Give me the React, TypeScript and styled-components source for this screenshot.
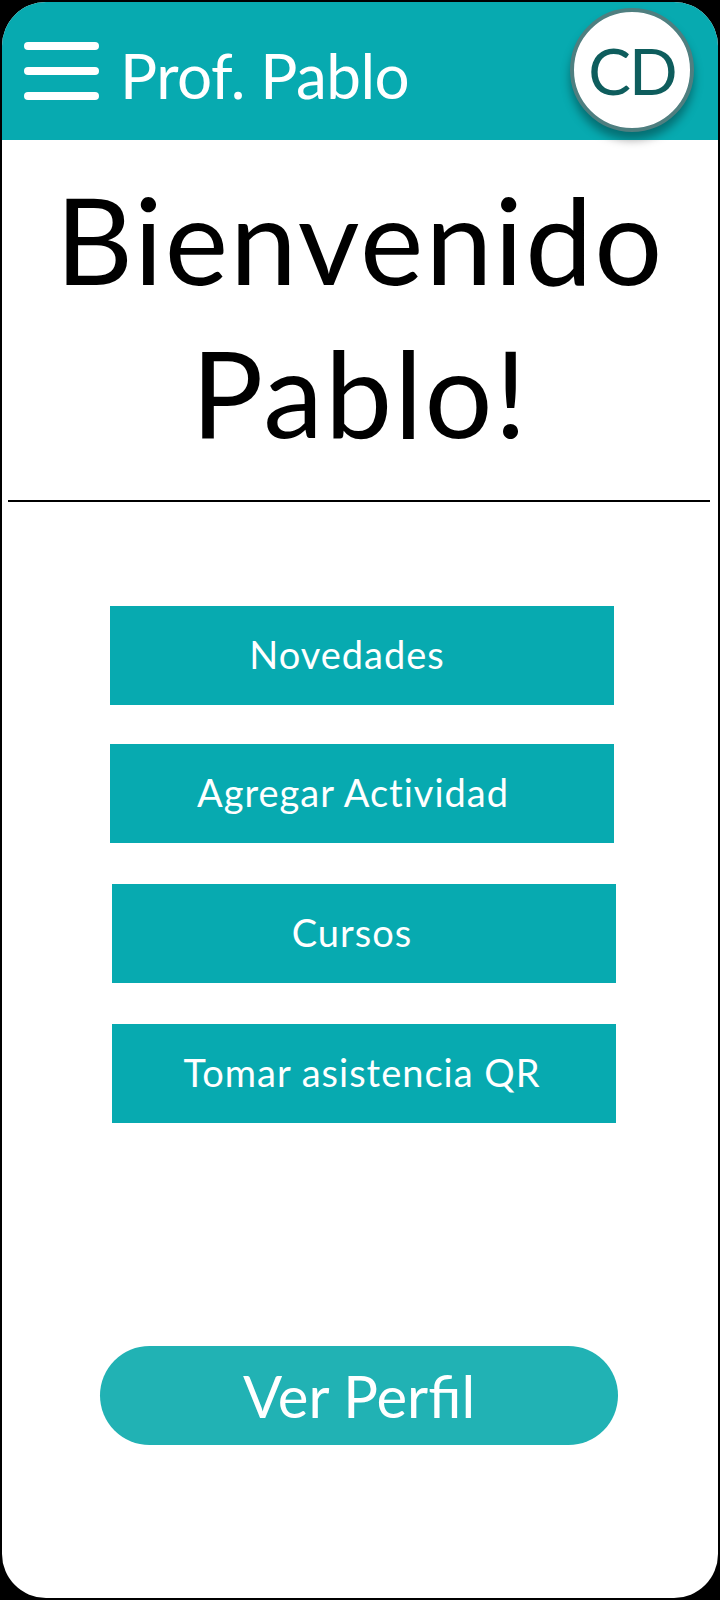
import React from "react";
import styled, { createGlobalStyle } from "styled-components";

const Global = createGlobalStyle`
  html, body { margin: 0; padding: 0; background: #000; }
  body { font-family: Lato, "Open Sans", sans-serif; }
  #root { padding: 2px; }
`;

const Card = styled.div`
  width: 716px;
  height: 1596px;
  background: #fff;
  border-radius: 44px;
  overflow: hidden;
  display: flex;
  flex-direction: column;
`;

const Header = styled.header`
  height: 138px;
  flex: none;
  background: #07aab0;
  display: flex;
  align-items: center;
  padding: 0 24px 0 22px;
`;

const Burger = styled.div`
  display: flex;
  flex-direction: column;
  gap: 17px;
  width: 75px;
  flex: none;
`;

const Bar = styled.span`
  display: block;
  height: 8px;
  border-radius: 4px;
  background: #fff;
`;

const Title = styled.h1`
  margin: 8px 0 0 21px;
  flex: 1;
  font-weight: 400;
  font-size: 62px;
  color: #fff;
  letter-spacing: -0.5px;
`;

const Avatar = styled.div`
  flex: none;
  width: 116px;
  height: 116px;
  border-radius: 50%;
  background: #fff;
  border: 4px solid #4f7f80;
  box-shadow: 0 8px 10px rgba(0, 0, 0, 0.35);
  display: flex;
  align-items: center;
  justify-content: center;
  color: #0e5d5d;
  font-size: 64px;
  letter-spacing: -2px;
  margin-top: -2px;
`;

const Welcome = styled.h2`
  margin: 23px 0 0;
  font-weight: 400;
  font-size: 120px;
  letter-spacing: 2px;
  line-height: 153px;
  text-align: center;
  color: #000;
`;

const Divider = styled.hr`
  margin: 31px 8px 0 6px;
  border: none;
  height: 2px;
  background: #000;
`;

const Menu = styled.nav`
  margin-top: 104px;
  display: flex;
  flex-direction: column;
`;

const MenuButton = styled.button<{ $shift?: number; $textShift?: number; $gap?: number }>`
  width: 504px;
  height: 99px;
  margin: ${(p) => p.$gap ?? 0}px 0 0 ${(p) => 108 + (p.$shift ?? 0)}px;
  padding: 0 ${(p) => p.$textShift ?? 0}px 4px 0;
  border: none;
  background: #07aab0;
  color: #fff;
  font-family: Lato, sans-serif;
  font-size: 38px;
  letter-spacing: 1px;
  display: flex;
  align-items: center;
  justify-content: center;
`;

const Spacer = styled.div`
  flex: 1;
`;

const ProfileButton = styled.button`
  width: 518px;
  height: 99px;
  margin: 0 0 153px 98px;
  padding-left: 6px;
  border: none;
  border-radius: 50px;
  background: #21b2b4;
  color: #fff;
  font-family: Lato, sans-serif;
  font-size: 58px;
`;

const items = [
  { label: "Novedades", shift: 0, text: 30, gap: 0 },
  { label: "Agregar Actividad", shift: 0, text: 18, gap: 39 },
  { label: "Cursos", shift: 2, text: 24, gap: 41 },
  { label: "Tomar asistencia QR", shift: 2, text: 4, gap: 41 },
];

export default function App() {
  return (
    <>
      <Global />
      <Card>
        <Header>
          <Burger>
            <Bar />
            <Bar />
            <Bar />
          </Burger>
          <Title>Prof. Pablo</Title>
          <Avatar>CD</Avatar>
        </Header>
        <Welcome>
          Bienvenido
          <br />
          Pablo!
        </Welcome>
        <Divider />
        <Menu>
          {items.map((it) => (
            <MenuButton key={it.label} $shift={it.shift} $textShift={it.text} $gap={it.gap}>
              {it.label}
            </MenuButton>
          ))}
        </Menu>
        <Spacer />
        <ProfileButton>Ver Perfil</ProfileButton>
      </Card>
    </>
  );
}
